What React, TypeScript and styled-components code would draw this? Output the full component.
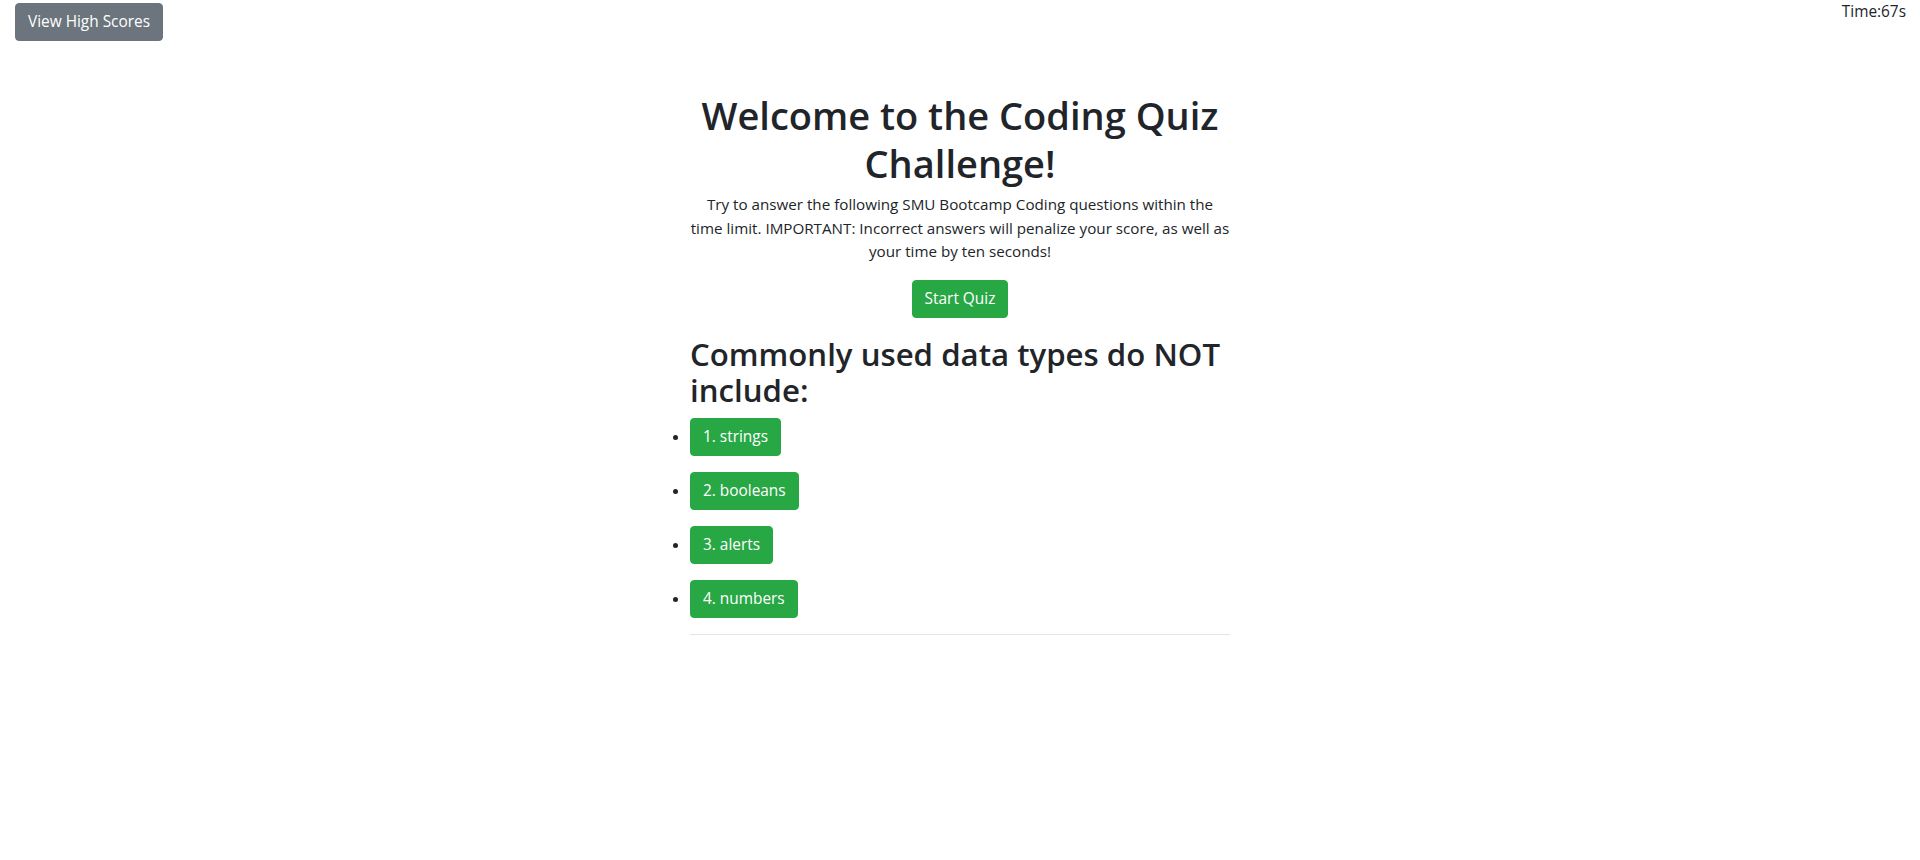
import React from "react";
import styled, { createGlobalStyle } from "styled-components";

const FONT = `"Open Sans", "Noto Sans", "Liberation Sans", sans-serif`;

const GlobalStyle = createGlobalStyle`
  html, body {
    margin: 0;
    padding: 0;
    background: #fff;
  }
  body {
    font-family: ${FONT};
    font-size: 15.4px;
    line-height: 1.5;
    color: #212529;
  }
  * { box-sizing: border-box; }
`;

const Page = styled.div`
  width: 1920px;
  min-height: 860px;
  display: flex;
  flex-direction: column;
`;

const TopBar = styled.header`
  display: flex;
  justify-content: space-between;
  align-items: flex-start;
  padding: 0 14px 0 15px;
`;

const Button = styled.button<{ $variant?: "secondary" | "success" }>`
  display: inline-block;
  font-family: ${FONT};
  font-size: 15.4px;
  line-height: 24px;
  font-weight: 400;
  padding: 6px 12px;
  border: 1px solid ${(p) => (p.$variant === "secondary" ? "#6c757d" : "#28a745")};
  background: ${(p) => (p.$variant === "secondary" ? "#6c757d" : "#28a745")};
  color: #fff;
  border-radius: 4px;
  cursor: pointer;
  white-space: nowrap;
`;

const ScoresButton = styled(Button)`
  margin-top: 3px;
`;

const Timer = styled.div`
  font-size: 15.4px;
  line-height: 24px;
`;

const Quiz = styled.main`
  width: 540px;
  margin: 0 auto;
  padding-top: 50px;
`;

const Intro = styled.section`
  display: flex;
  flex-direction: column;
  align-items: center;
  text-align: center;
`;

const Title = styled.h1`
  margin: 0 0 6px;
  font-size: 38px;
  line-height: 48px;
  font-weight: 600;
`;

const Lead = styled.p`
  margin: 0 0 16px;
  font-size: 15.2px;
  line-height: 23.5px;
  white-space: nowrap;
`;

const Question = styled.h2`
  margin: 18px 0 10px;
  font-size: 31.2px;
  line-height: 36px;
  font-weight: 600;
`;

const Choices = styled.ul`
  margin: 0;
  padding: 0;
  list-style: disc outside;
`;

const Choice = styled.li`
  margin-bottom: 16px;
  line-height: 24px;
`;

const Divider = styled.hr`
  margin: 0;
  border: 0;
  border-top: 1px solid rgba(0, 0, 0, 0.1);
`;

const choices = ["1. strings", "2. booleans", "3. alerts", "4. numbers"];

export default function App() {
  return (
    <Page>
      <GlobalStyle />
      <TopBar>
        <ScoresButton $variant="secondary">View High Scores</ScoresButton>
        <Timer>Time:67s</Timer>
      </TopBar>
      <Quiz>
        <Intro>
          <Title>Welcome to the Coding Quiz Challenge!</Title>
          <Lead>
            Try to answer the following SMU Bootcamp Coding questions within the
            <br />
            time limit. IMPORTANT: Incorrect answers will penalize your score, as well as
            <br />
            your time by ten seconds!
          </Lead>
          <Button $variant="success">Start Quiz</Button>
        </Intro>
        <Question>Commonly used data types do NOT include:</Question>
        <Choices>
          {choices.map((c) => (
            <Choice key={c}>
              <Button $variant="success">{c}</Button>
            </Choice>
          ))}
        </Choices>
        <Divider />
      </Quiz>
    </Page>
  );
}
